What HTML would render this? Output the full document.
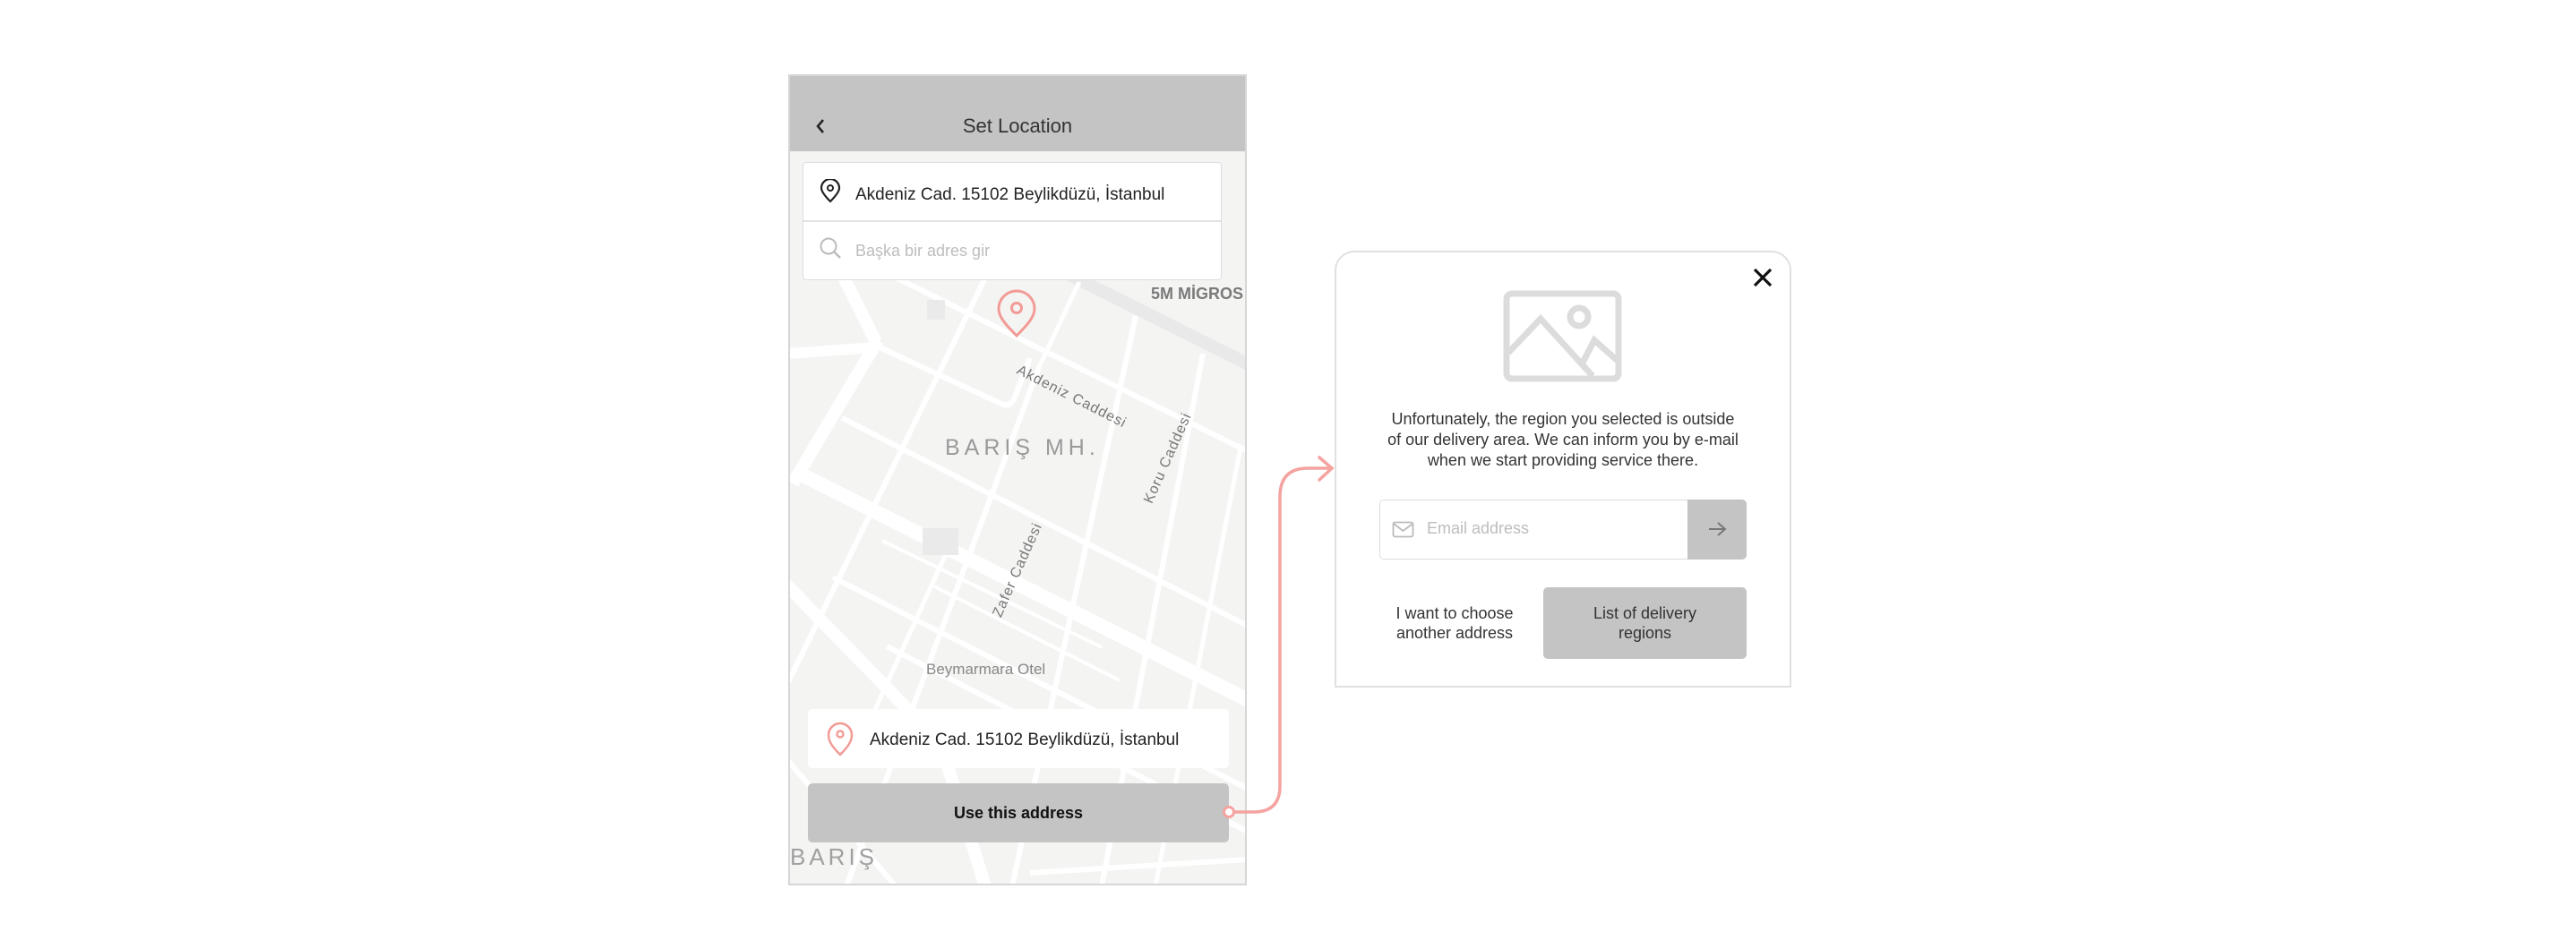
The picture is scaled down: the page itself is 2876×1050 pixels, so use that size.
<!DOCTYPE html>
<html><head><meta charset="utf-8">
<style>
*{margin:0;padding:0;box-sizing:border-box}
body{width:2876px;height:1050px;background:#fff;position:relative;overflow:hidden;font-family:"Liberation Sans",sans-serif;color:#333}
.abs{position:absolute}
</style></head><body>
<!-- phone -->
<div class="abs" style="left:880px;top:83px;width:512px;height:906px;border:2px solid #d6d6d6;background:#f4f4f3;overflow:hidden"></div>
<svg class="abs" style="left:0;top:0" width="2876" height="1050">
<defs><clipPath id="c"><rect x="882" y="169" width="508" height="818"/></clipPath></defs>
<g clip-path="url(#c)" stroke="#fff" stroke-linecap="butt" fill="none">
<line x1="1180" y1="300" x2="1400" y2="410" stroke="#e8e9e8" stroke-width="14"/>
<line x1="1000" y1="310" x2="1395" y2="505" stroke-width="6"/>
<line x1="980" y1="387" x2="1120" y2="452" stroke-width="6"/>
<path d="M1120 452 Q1128 454 1132 446 L1150 400" stroke-width="6"/>
<line x1="940" y1="467" x2="1395" y2="700" stroke-width="6"/>
<line x1="895" y1="530" x2="1395" y2="783" stroke-width="16"/>
<line x1="930" y1="645" x2="1395" y2="882" stroke-width="6"/>
<line x1="990" y1="722" x2="1395" y2="930" stroke-width="6"/>
<line x1="985" y1="604" x2="1230" y2="723" stroke-width="4"/>
<line x1="1043" y1="655" x2="1250" y2="760" stroke-width="4"/>
<line x1="1110" y1="290" x2="880" y2="762" stroke-width="6"/>
<line x1="1205" y1="315" x2="1160" y2="410" stroke-width="5"/>
<line x1="1160" y1="410" x2="945" y2="990" stroke-width="6"/>
<line x1="1268" y1="353" x2="1130" y2="990" stroke-width="6"/>
<line x1="1343" y1="395" x2="1230" y2="990" stroke-width="6"/>
<line x1="1385" y1="500" x2="1290" y2="990" stroke-width="5"/>
<line x1="1060" y1="610" x2="960" y2="830" stroke-width="5"/>
<line x1="980" y1="380" x2="885" y2="540" stroke-width="14"/>
<line x1="937" y1="300" x2="978" y2="382" stroke-width="14"/>
<line x1="880" y1="395" x2="978" y2="388" stroke-width="12"/>
<line x1="875" y1="650" x2="1050" y2="830" stroke-width="14"/>
<line x1="1050" y1="830" x2="1100" y2="990" stroke-width="14"/>
<line x1="880" y1="850" x2="1000" y2="990" stroke-width="6"/>
<line x1="1150" y1="975" x2="1395" y2="960" stroke-width="6"/>
<rect x="1030" y="590" width="40" height="30" fill="#e9eae9" stroke="none"/>
<rect x="1035" y="335" width="20" height="22" fill="#e9eae9" stroke="none"/>
</g>
<!-- connector -->
<path d="M1378 907 L1400 907 Q1429 907 1429 878 L1429 555 Q1429 523 1460 523 L1486 523" stroke="#f4a3a0" stroke-width="3.5" fill="none"/>
<path d="M1473 511 L1487 523 L1473 536" stroke="#f4a3a0" stroke-width="3.5" fill="none" stroke-linecap="round"/>
</svg>
<!-- map labels -->
<div class="abs" style="left:1055px;top:486px;font-size:25px;letter-spacing:5px;color:#9a9a9a">BARIŞ MH.</div>
<div class="abs" style="left:1285px;top:318px;font-size:18px;color:#7a7a7a;font-weight:bold">5M MİGROS</div>
<div class="abs" style="left:1140px;top:405px;font-size:16px;color:#777;transform:rotate(27deg);transform-origin:left top;letter-spacing:1px">Akdeniz Caddesi</div>
<div class="abs" style="left:1250px;top:503px;font-size:16px;color:#777;transform:rotate(-66deg);letter-spacing:1px">Koru Caddesi</div>
<div class="abs" style="left:1080px;top:628px;font-size:16px;color:#777;transform:rotate(-66deg);letter-spacing:1px">Zafer Caddesi</div>
<div class="abs" style="left:1034px;top:738px;font-size:17px;color:#888">Beymarmara Otel</div>
<div class="abs" style="left:882px;top:942px;font-size:26px;color:#a0a0a0;letter-spacing:4px">BARIŞ</div>
<!-- header -->
<div class="abs" style="left:882px;top:85px;width:508px;height:84px;background:#c4c4c4"></div>
<svg class="abs" style="left:908px;top:130px" width="16" height="22"><path d="M11 4 L5 11 L11 18" stroke="#222" stroke-width="2.5" fill="none"/></svg>
<div class="abs" style="left:882px;top:128px;width:508px;text-align:center;font-size:22px;color:#333">Set Location</div>
<!-- search card -->
<div class="abs" style="left:896px;top:181px;width:468px;height:132px;background:#fff;border:1.5px solid #ddd;border-radius:4px"></div>
<div class="abs" style="left:897px;top:246px;width:466px;height:2px;background:#e3e3e3"></div>
<svg class="abs" style="left:914px;top:200px" width="26" height="28"><path d="M13 25 C5 17 3 13 3 10 A10 10 0 0 1 23 10 C23 13 21 17 13 25Z" stroke="#222" stroke-width="2.2" fill="none"/><circle cx="13" cy="10" r="3" stroke="#222" stroke-width="2" fill="none"/></svg>
<div class="abs" style="left:955px;top:207px;font-size:19px;color:#222">Akdeniz Cad. 15102 Beylikdüzü, İstanbul</div>
<svg class="abs" style="left:914px;top:264px" width="28" height="28"><circle cx="11" cy="11" r="8.5" stroke="#bbb" stroke-width="2" fill="none"/><line x1="17" y1="17" x2="24" y2="24" stroke="#bbb" stroke-width="2.4"/></svg>
<div class="abs" style="left:955px;top:270px;font-size:18px;color:#bdbdbd">Başka bir adres gir</div>
<!-- red pin -->
<svg class="abs" style="left:1112px;top:323px" width="46" height="56"><path d="M23 52 C9 38 3 30 3 22 A20 20 0 0 1 43 22 C43 30 37 38 23 52Z" stroke="#f29b96" stroke-width="3" fill="none"/><circle cx="23" cy="21" r="5.5" stroke="#f29b96" stroke-width="3" fill="none"/></svg>
<!-- bottom card -->
<div class="abs" style="left:902px;top:792px;width:470px;height:66px;background:#fff;border-radius:5px"></div>
<svg class="abs" style="left:922px;top:806px" width="32" height="40"><path d="M16 37 C7 28 3 22 3 15 A13 13 0 0 1 29 15 C29 22 25 28 16 37Z" stroke="#f29b96" stroke-width="2.5" fill="none"/><circle cx="16" cy="14" r="3.5" stroke="#f29b96" stroke-width="2.4" fill="none"/></svg>
<div class="abs" style="left:971px;top:816px;font-size:19px;color:#222">Akdeniz Cad. 15102 Beylikdüzü, İstanbul</div>
<div class="abs" style="left:902px;top:875px;width:470px;height:66px;background:#c4c4c4;border-radius:5px;text-align:center;line-height:66px;font-size:18px;font-weight:bold;color:#111">Use this address</div>
<svg class="abs" style="left:1364px;top:899px" width="18" height="18"><circle cx="8" cy="8" r="5.5" fill="#fff" stroke="#f4a3a0" stroke-width="3"/></svg>
<!-- modal -->
<div class="abs" style="left:1490px;top:280px;width:510px;height:488px;border:2px solid #e0e0e0;border-radius:22px 22px 0 0;background:#fff"></div>
<svg class="abs" style="left:1956px;top:298px" width="24" height="24"><path d="M3 3 L21 21 M21 3 L3 21" stroke="#111" stroke-width="3.2"/></svg>
<svg class="abs" style="left:1678px;top:324px" width="134" height="104"><rect x="4" y="4" width="125" height="95" rx="6" stroke="#dcdcdc" stroke-width="7" fill="none"/><circle cx="85" cy="30" r="10" stroke="#dcdcdc" stroke-width="7" fill="none"/><path d="M6 70 L42 32 L100 96 M88 83 L102 56 L128 79" stroke="#dcdcdc" stroke-width="7" fill="none"/></svg>
<div class="abs" style="left:1492px;top:457px;width:506px;text-align:center;font-size:18px;line-height:23px;color:#333">Unfortunately, the region you selected is outside<br>of our delivery area. We can inform you by e-mail<br>when we start providing service there.</div>
<div class="abs" style="left:1540px;top:558px;width:410px;height:67px;border:1.5px solid #ddd;border-radius:5px;background:#fff"></div>
<div class="abs" style="left:1884px;top:558px;width:66px;height:67px;background:#c4c4c4;border-radius:0 5px 5px 0"></div>
<svg class="abs" style="left:1906px;top:581px" width="24" height="20"><path d="M2 10 L20 10 M12 3 L20 10 L12 17" stroke="#777" stroke-width="2" fill="none"/></svg>
<svg class="abs" style="left:1554px;top:582px" width="26" height="20"><rect x="1.5" y="1.5" width="22" height="16" rx="2" stroke="#bbb" stroke-width="1.8" fill="none"/><path d="M2 3 L12.5 11 L23 3" stroke="#bbb" stroke-width="1.8" fill="none"/></svg>
<div class="abs" style="left:1593px;top:580px;font-size:18px;color:#bdbdbd">Email address</div>
<div class="abs" style="left:1538px;top:674px;width:172px;text-align:center;font-size:18px;line-height:22px;color:#333">I want to choose<br>another address</div>
<div class="abs" style="left:1723px;top:656px;width:227px;height:80px;background:#c4c4c4;border-radius:5px;display:flex;align-items:center;justify-content:center;text-align:center;font-size:18px;line-height:22px;color:#333">List of delivery<br>regions</div>
</body></html>
